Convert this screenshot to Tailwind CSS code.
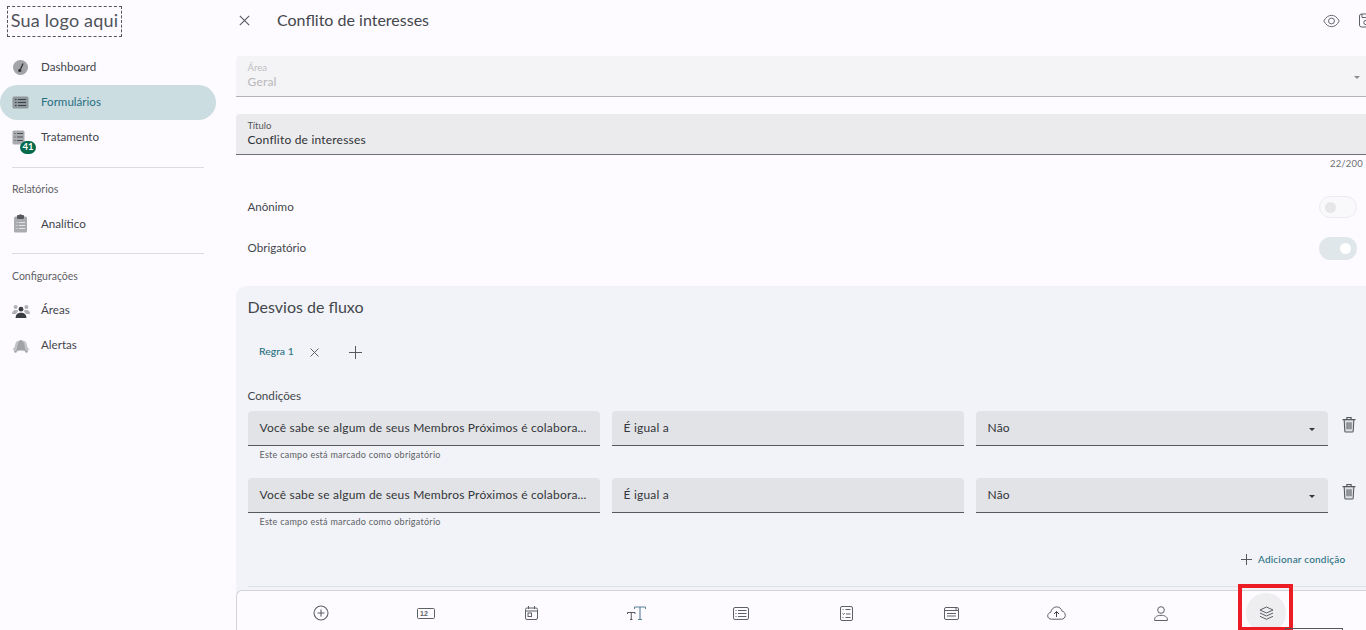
<!DOCTYPE html>
<html lang="pt-BR">
<head>
<meta charset="utf-8">
<title>Conflito de interesses</title>
<script src="https://cdn.jsdelivr.net/npm/@tailwindcss/browser@4"></script>
</head>
<body class="m-0 overflow-hidden bg-[#fdfbff]">
<div class="relative flex h-[630px] w-[1366px] overflow-hidden bg-[#fdfbff] font-['Lato','Liberation_Sans',sans-serif] text-[#44474a]">

  <!-- Sidebar -->
  <aside class="w-[236px] shrink-0">
    <div class="ml-[7px] mt-[6px] flex h-[31px] w-[115px] items-center justify-center whitespace-nowrap border border-dashed border-[#555] pb-[3px] text-[18px] leading-none tracking-[0.2px] text-[#50535a]">Sua logo aqui</div>
    <nav class="mt-[12px] w-[216px] text-[11.600px] text-[#42464c]">
      <div class="flex h-[36px] items-center pl-[12px]">
        <svg class="h-[17px] w-[17px]" viewBox="0 0 17 17"><circle cx="8.500" cy="8.500" r="7.500" fill="#a3a4a8"/><path d="M11 4.500 8.600 10" stroke="#333" stroke-width="1.300" fill="none"/><circle cx="7.800" cy="11.400" r="1.600" fill="#333"/></svg>
        <span class="ml-[12px]">Dashboard</span>
      </div>
      <div class="flex h-[35px] items-center rounded-full bg-[#cbdde1] pl-[12px] text-[#2a6f82]">
        <svg class="h-[13px] w-[17px]" viewBox="0 0 17 13"><rect width="16" height="12" x=".5" y=".5" rx="1.500" fill="#8d979c"/><path d="M3 3.500h1.500M3 6.500h1.500M3 9.500h1.500M6 3.500h8M6 6.500h8M6 9.500h8" stroke="#3a4448" stroke-width="1.100"/></svg>
        <span class="ml-[12px] pb-[2px]">Formulários</span>
      </div>
      <div class="flex h-[35px] items-center pl-[12px]">
        <div class="relative h-[16px] w-[17px]">
          <svg class="h-[15px] w-[13px]" viewBox="0 0 13 15"><rect x=".5" y=".5" width="12" height="14" rx="1.500" fill="#a9abaf"/><path d="M2.500 3.500h1M2.500 7h1M2.500 10.500h1M5 3.500h6M5 7h6M5 10.500h6" stroke="#4c4f54" stroke-width="1"/></svg>
          <span class="absolute left-[8px] top-[11px] flex h-[13px] w-[16px] items-center justify-center rounded-full bg-[#056a4a] text-[9.500px] font-bold leading-none text-white">41</span>
        </div>
        <span class="ml-[12px] pb-[2px]">Tratamento</span>
      </div>
      <div class="ml-[12px] mt-[12px] h-[1px] w-[192px] bg-[#dcdcde]"></div>
      <div class="ml-[12px] mt-[14px] text-[10.600px] leading-[14px] text-[#5e6166]">Relatórios</div>
      <div class="mt-[10px] flex h-[35px] items-center pl-[12px]">
        <svg class="h-[19px] w-[17px]" viewBox="0 0 17 19"><rect x="2" y="2.500" width="13" height="16" rx="1.500" fill="#a9abaf"/><rect x="5" y="1" width="7" height="4" rx="1" fill="#55585c"/><circle cx="8.500" cy="1.600" r="1.300" fill="#55585c"/><path d="M4.500 8.500h1M4.500 11.500h1M4.500 14.500h1M7 8.500h6M7 11.500h6M7 14.500h6" stroke="#e2e2e4" stroke-width="1"/></svg>
        <span class="ml-[12px]">Analítico</span>
      </div>
      <div class="ml-[12px] mt-[12px] h-[1px] w-[192px] bg-[#dcdcde]"></div>
      <div class="ml-[12px] mt-[15px] text-[10.500px] leading-[14px] text-[#5e6166]">Configurações</div>
      <div class="mt-[10px] flex h-[35px] items-center pl-[12px]">
        <svg class="h-[14px] w-[18px]" viewBox="0 0 18 14"><circle cx="3.600" cy="3" r="2" fill="#b0b2b5"/><circle cx="14.400" cy="3" r="2" fill="#b0b2b5"/><path d="M0 10c0-3 1.500-4 3.600-4 1 0 2 .3 2.600 1L4 10zM18 10c0-3-1.500-4-3.600-4-1 0-2 .3-2.600 1l2.200 3z" fill="#b0b2b5"/><circle cx="9" cy="5.200" r="2.400" fill="#3a3d42"/><path d="M3.600 14c0-3.500 2.200-5.300 5.400-5.300s5.400 1.800 5.400 5.300z" fill="#3a3d42"/></svg>
        <span class="ml-[11px] pb-[2px]">Áreas</span>
      </div>
      <div class="flex h-[35px] items-center pl-[12px]">
        <svg class="h-[14px] w-[18px]" viewBox="0 0 18 14"><path d="M7 1.500C5 1.800 3.800 3 3.300 5 2.800 7 2.600 8.800 .4 10.800l6 1.700z" fill="#c3c4c7"/><path d="M11 1.500c2 .3 3.200 1.500 3.700 3.500.5 2 .7 3.800 2.900 5.800l-6 1.700z" fill="#c3c4c7"/><path d="M4 11.500c1.200-2 1.300-4.500 1.800-6.500C6.300 3 7.600 1 9 1s2.700 2 3.200 4c.5 2 .6 4.500 1.800 6.500z" fill="#a0a2a6"/><circle cx="3.500" cy="12.500" r="1.300" fill="#a0a2a6"/><circle cx="14.500" cy="12.500" r="1.300" fill="#a0a2a6"/></svg>
        <span class="ml-[11px] pb-[2px]">Alertas</span>
      </div>
    </nav>
  </aside>

  <!-- Main -->
  <main class="w-[1150px] shrink-0">
    <header class="flex h-[41px] items-center">
      <svg class="ml-[3px] h-[11px] w-[11px]" viewBox="0 0 11 11"><path d="M.8.800l9.400 9.400M10.200.800.800 10.200" stroke="#55585d" stroke-width="1.100" fill="none"/></svg>
      <h1 class="ml-[27px] pb-[2px] text-[16px] font-normal leading-none text-[#44474c]">Conflito de interesses</h1>
      <svg class="ml-auto h-[14px] w-[17px]" viewBox="0 0 18 14"><path d="M.8 7C3 3 5.800 1 9 1s6 2 8.200 6C15 11 12.200 13 9 13S3 11 .8 7z" fill="none" stroke="#5d6065" stroke-width="1"/><circle cx="9" cy="7" r="3.100" fill="none" stroke="#5d6065" stroke-width="1"/></svg>
      <svg class="ml-[19px] mr-[13px] h-[15px] w-[14px]" viewBox="0 0 14 15"><rect x=".5" y="1" width="13" height="13" rx="2" fill="none" stroke="#5d6065"/><path d="M3 1v3.500h6V1" fill="none" stroke="#5d6065"/><circle cx="7" cy="9.500" r="2.200" fill="none" stroke="#5d6065"/></svg>
    </header>

    <div class="mt-[15px] flex h-[41px] flex-col rounded-t-[4px] border-b border-[#b3b3b5] bg-[#f4f3f5] pl-[11.500px]">
      <div class="relative">
        <span class="absolute left-0 top-[6px] text-[9.500px] leading-[12px] text-[#c0c0c3]">Área</span>
        <span class="absolute left-0 top-[18px] text-[12px] leading-[16px] tracking-[0.2px] text-[#b8b8bb]">Geral</span>
        <span class="absolute left-[1106px] top-[20px] h-0 w-0 border-x-[3px] border-t-[3px] border-x-transparent border-t-[#8c8c90]"></span>
      </div>
    </div>

    <div class="mt-[17px] h-[41px] rounded-t-[4px] border-b border-[#6f7176] bg-[#ebebed] pl-[11.500px] pt-[6px]">
      <div class="text-[9.500px] leading-[12px] text-[#53565b]">Título</div>
      <div class="text-[12px] leading-[16px] tracking-[0.2px] text-[#2f3236]">Conflito de interesses</div>
    </div>
    <div class="mr-[23px] mt-[3px] h-[12px] text-right text-[9.500px] leading-[12px] tracking-[0.2px] text-[#6c6f73]">22/200</div>

    <div class="mt-[25px] flex h-[24px] w-[1130px] items-center justify-between pl-[11.500px] pr-[9px] text-[11.600px] text-[#44474c]">
      <span>Anônimo</span>
      <span class="flex h-[22px] w-[38px] items-center rounded-full border border-[#ececee] bg-[#f9f8fb] pl-[5px]"><span class="h-[11px] w-[11px] rounded-full bg-[#e6e6e8]"></span></span>
    </div>
    <div class="mt-[17px] flex h-[24px] w-[1130px] items-center justify-between pl-[11.500px] pr-[9px] text-[11.600px] text-[#44474c]">
      <span>Obrigatório</span>
      <span class="flex h-[23px] w-[38px] items-center justify-end rounded-full bg-[#dfe7eb] pr-[6px]"><span class="h-[11px] w-[11px] rounded-full bg-white"></span></span>
    </div>

    <section class="mt-[26px] h-[400px] rounded-tl-[10px] bg-[#f1f3f8] pl-[11.500px]">
      <h2 class="pt-[11px] text-[16px] font-normal leading-[20px] text-[#44474c]">Desvios de fluxo</h2>
      <div class="mt-[25px] flex h-[20px] items-center text-[10.400px] font-medium text-[#2a6f82]">
        <span class="ml-[11.500px]">Regra 1</span>
        <svg class="ml-[16px] h-[9px] w-[9px]" viewBox="0 0 9 9"><path d="M.5.500l8 8M8.500.500l-8 8" stroke="#606368" stroke-width="1" fill="none"/></svg>
        <svg class="ml-[30px] h-[13px] w-[13px]" viewBox="0 0 13 13"><path d="M6.500 0v13M0 6.500h13" stroke="#55585d" stroke-width="1" fill="none"/></svg>
      </div>
      <div class="mt-[25px] h-[16px] text-[11.700px] leading-[16px] text-[#44474c]">Condições</div>
      <div class="ml-[0.500px] mt-[8px] flex gap-[12px]">
        <div class="w-[352px]">
          <div class="flex h-[35px] items-center whitespace-nowrap rounded-t-[4px] border-b border-[#55585d] bg-[#e2e3e6] px-[11.500px] text-[12px] tracking-[0.2px] text-[#33363a]">Você sabe se algum de seus Membros Próximos é colabora...</div>
          <div class="mt-[3px] pl-[11.500px] text-[9px] leading-[12px] tracking-[0.27px] text-[#5e6166]">Este campo está marcado como obrigatório</div>
        </div>
        <div class="flex h-[35px] w-[352px] items-center rounded-t-[4px] border-b border-[#55585d] bg-[#e2e3e6] px-[11.500px] text-[12px] tracking-[0.2px] text-[#33363a]">É igual a</div>
        <div class="flex h-[35px] w-[352px] items-center justify-between rounded-t-[4px] border-b border-[#55585d] bg-[#e2e3e6] px-[11.500px] text-[12px] tracking-[0.2px] text-[#33363a]">Não<span class="mr-[2px] mt-[2px] h-0 w-0 border-x-[3px] border-t-[3px] border-x-transparent border-t-[#33363a]"></span></div>
        <svg class="ml-[2px] mt-[5px] h-[17px] w-[14px]" viewBox="0 0 13 15"><path d="M.5 3h12M4.500 3V1h4v2M2 3l.6 10.500c0 .6.500 1 1 1h5.800c.5 0 1-.4 1-1L11 3z" fill="#dfe1e6" stroke="#55585d" stroke-width="1"/><path d="M4.700 5.500v6.500M6.500 5.500v6.500M8.300 5.500v6.500" fill="none" stroke="#55585d" stroke-width="1"/></svg>
      </div>
      <div class="ml-[0.500px] mt-[17px] flex gap-[12px]">
        <div class="w-[352px]">
          <div class="flex h-[35px] items-center whitespace-nowrap rounded-t-[4px] border-b border-[#55585d] bg-[#e2e3e6] px-[11.500px] text-[12px] tracking-[0.2px] text-[#33363a]">Você sabe se algum de seus Membros Próximos é colabora...</div>
          <div class="mt-[3px] pl-[11.500px] text-[9px] leading-[12px] tracking-[0.27px] text-[#5e6166]">Este campo está marcado como obrigatório</div>
        </div>
        <div class="flex h-[35px] w-[352px] items-center rounded-t-[4px] border-b border-[#55585d] bg-[#e2e3e6] px-[11.500px] text-[12px] tracking-[0.2px] text-[#33363a]">É igual a</div>
        <div class="flex h-[35px] w-[352px] items-center justify-between rounded-t-[4px] border-b border-[#55585d] bg-[#e2e3e6] px-[11.500px] text-[12px] tracking-[0.2px] text-[#33363a]">Não<span class="mr-[2px] mt-[2px] h-0 w-0 border-x-[3px] border-t-[3px] border-x-transparent border-t-[#33363a]"></span></div>
        <svg class="ml-[2px] mt-[5px] h-[17px] w-[14px]" viewBox="0 0 13 15"><path d="M.5 3h12M4.500 3V1h4v2M2 3l.6 10.500c0 .6.500 1 1 1h5.800c.5 0 1-.4 1-1L11 3z" fill="#dfe1e6" stroke="#55585d" stroke-width="1"/><path d="M4.700 5.500v6.500M6.500 5.500v6.500M8.300 5.500v6.500" fill="none" stroke="#55585d" stroke-width="1"/></svg>
      </div>
      <div class="mt-[23px] flex h-[16px] items-center pl-[993.500px] text-[10px] font-medium tracking-[0.2px] text-[#2a6f82]">
        <svg class="mr-[6px] h-[11px] w-[11px]" viewBox="0 0 11 11"><path d="M5.500 0v11M0 5.500h11" stroke="#55585d" stroke-width="1" fill="none"/></svg>
        <span>Adicionar condição</span>
      </div>
      <div class="mt-[19px] h-[1px] bg-[#dfe1e5]"></div>
    </section>
  </main>

  <!-- Floating bottom toolbar -->
  <div class="absolute bottom-0 left-[236px] flex h-[40px] w-[1130px] items-start overflow-hidden rounded-tl-[6px] border-l border-t border-[#d3d3d8] bg-[#fdfbff] pl-[31.500px]">
    <div class="flex h-[44px] w-[105px] shrink-0 items-center justify-center"><svg class="h-[16px] w-[16px]" viewBox="0 0 16 16"><circle cx="8" cy="8" r="7" fill="none" stroke="#5d6065" stroke-width="1.100"/><path d="M8 4.500v7M4.500 8h7" stroke="#5d6065" stroke-width="1.100"/></svg></div>
    <div class="flex h-[44px] w-[105px] shrink-0 items-center justify-center"><div class="flex h-[11px] w-[18px] items-center rounded-[1.500px] border border-[#5d6065] pl-[2px] font-['Liberation_Sans',sans-serif] text-[7px] font-bold leading-none text-[#5d6065]">12</div></div>
    <div class="flex h-[44px] w-[105px] shrink-0 items-center justify-center"><svg class="h-[14px] w-[13px]" viewBox="0 0 13 14"><rect x=".5" y="2" width="12" height="11.500" rx="1.500" fill="none" stroke="#5d6065"/><path d="M3.500 0v3M9.500 0v3M.5 5h12" stroke="#5d6065"/><rect x="3" y="7" width="3.500" height="3.500" fill="none" stroke="#5d6065"/></svg></div>
    <div class="flex h-[44px] w-[105px] shrink-0 items-center justify-center"><svg class="h-[14px] w-[19px]" viewBox="0 0 19 14"><path d="M7.500 1h11M13 1v12.500M11 13.500h4M7.500 3V1M18.500 3V1" fill="none" stroke="#5a7f9a" stroke-width="1.100"/><path d="M.5 6.500h7.500M4.250 6.500v7M3 13.500h2.500M.5 8V6.500M8 8V6.500" fill="none" stroke="#55585d" stroke-width="1"/></svg></div>
    <div class="flex h-[44px] w-[105px] shrink-0 items-center justify-center"><svg class="h-[13px] w-[16px]" viewBox="0 0 16 13"><rect x=".5" y=".5" width="15" height="12" rx="1.500" fill="none" stroke="#5d6065"/><path d="M2.500 3.500h1M2.500 6.500h1M2.500 9.500h1M5 3.500h8.500M5 6.500h8.500M5 9.500h8.500" stroke="#5d6065"/></svg></div>
    <div class="flex h-[44px] w-[105px] shrink-0 items-center justify-center"><svg class="h-[15px] w-[13px]" viewBox="0 0 13 15"><rect x=".5" y=".5" width="12" height="14" rx="1.500" fill="none" stroke="#5d6065"/><path d="M2.500 3.500h1M2.500 7.500l1 1 1.200-1.500M2.500 11.500h1M5.500 3.500h5M6 8h4.500M5.500 11.500h5" stroke="#5d6065" fill="none"/></svg></div>
    <div class="flex h-[44px] w-[105px] shrink-0 items-center justify-center"><svg class="h-[13px] w-[15px]" viewBox="0 0 15 13"><rect x=".5" y=".5" width="14" height="12" rx="1.500" fill="none" stroke="#5d6065"/><path d="M.5 3.500h14M3 6.500h9M3 9h9" stroke="#5d6065"/><path d="M11 2h2" stroke="#5d6065"/></svg></div>
    <div class="flex h-[44px] w-[105px] shrink-0 items-center justify-center"><svg class="h-[14px] w-[19px]" viewBox="0 0 19 14"><path d="M4.500 13.200C2.300 13.200.7 11.800.7 9.800c0-1.800 1.300-3.200 3-3.400C4.200 3.200 6.700 .9 9.700.9c2.700 0 4.800 1.800 5.300 4.200 1.900.3 3.300 2.200 3.300 4.200 0 2.200-1.600 3.900-3.800 3.900z" fill="none" stroke="#5d6065" stroke-width="1"/><path d="M9.500 11V5.500M7 8l2.500-2.500L12 8" fill="none" stroke="#3f4247" stroke-width="1"/></svg></div>
    <div class="flex h-[44px] w-[105px] shrink-0 items-center justify-center"><svg class="h-[15px] w-[14px]" viewBox="0 0 14 15"><circle cx="7" cy="4" r="3.300" fill="none" stroke="#5d6065"/><path d="M.7 14.500v-1.700c0-2 2.800-3.500 6.300-3.500s6.300 1.500 6.300 3.500v1.700z" fill="none" stroke="#5d6065"/></svg></div>
    <div class="flex h-[44px] w-[105px] shrink-0 items-center justify-center"><div class="flex h-[40px] w-[40px] shrink-0 items-center justify-center rounded-full bg-[#eeeef0]"><svg class="h-[15px] w-[15px]" viewBox="0 0 15 15"><path d="M7.500 1 14 4 7.500 7 1 4zM1 7l6.500 3L14 7M1 10.300l6.500 3 6.500-3" fill="none" stroke="#5d6065" stroke-width="1" stroke-linejoin="round"/></svg></div></div>
  </div>

  <!-- Annotation overlay -->
  <div class="absolute left-[1238px] top-[584px] h-[46px] w-[55px] border-[4px] border-b-[3px] border-[#ec1c24]"></div>
  <div class="absolute left-[1285px] top-[628px] h-[2px] w-[58px] border-x border-t border-[#555]"></div>
</div>
</body>
</html>
